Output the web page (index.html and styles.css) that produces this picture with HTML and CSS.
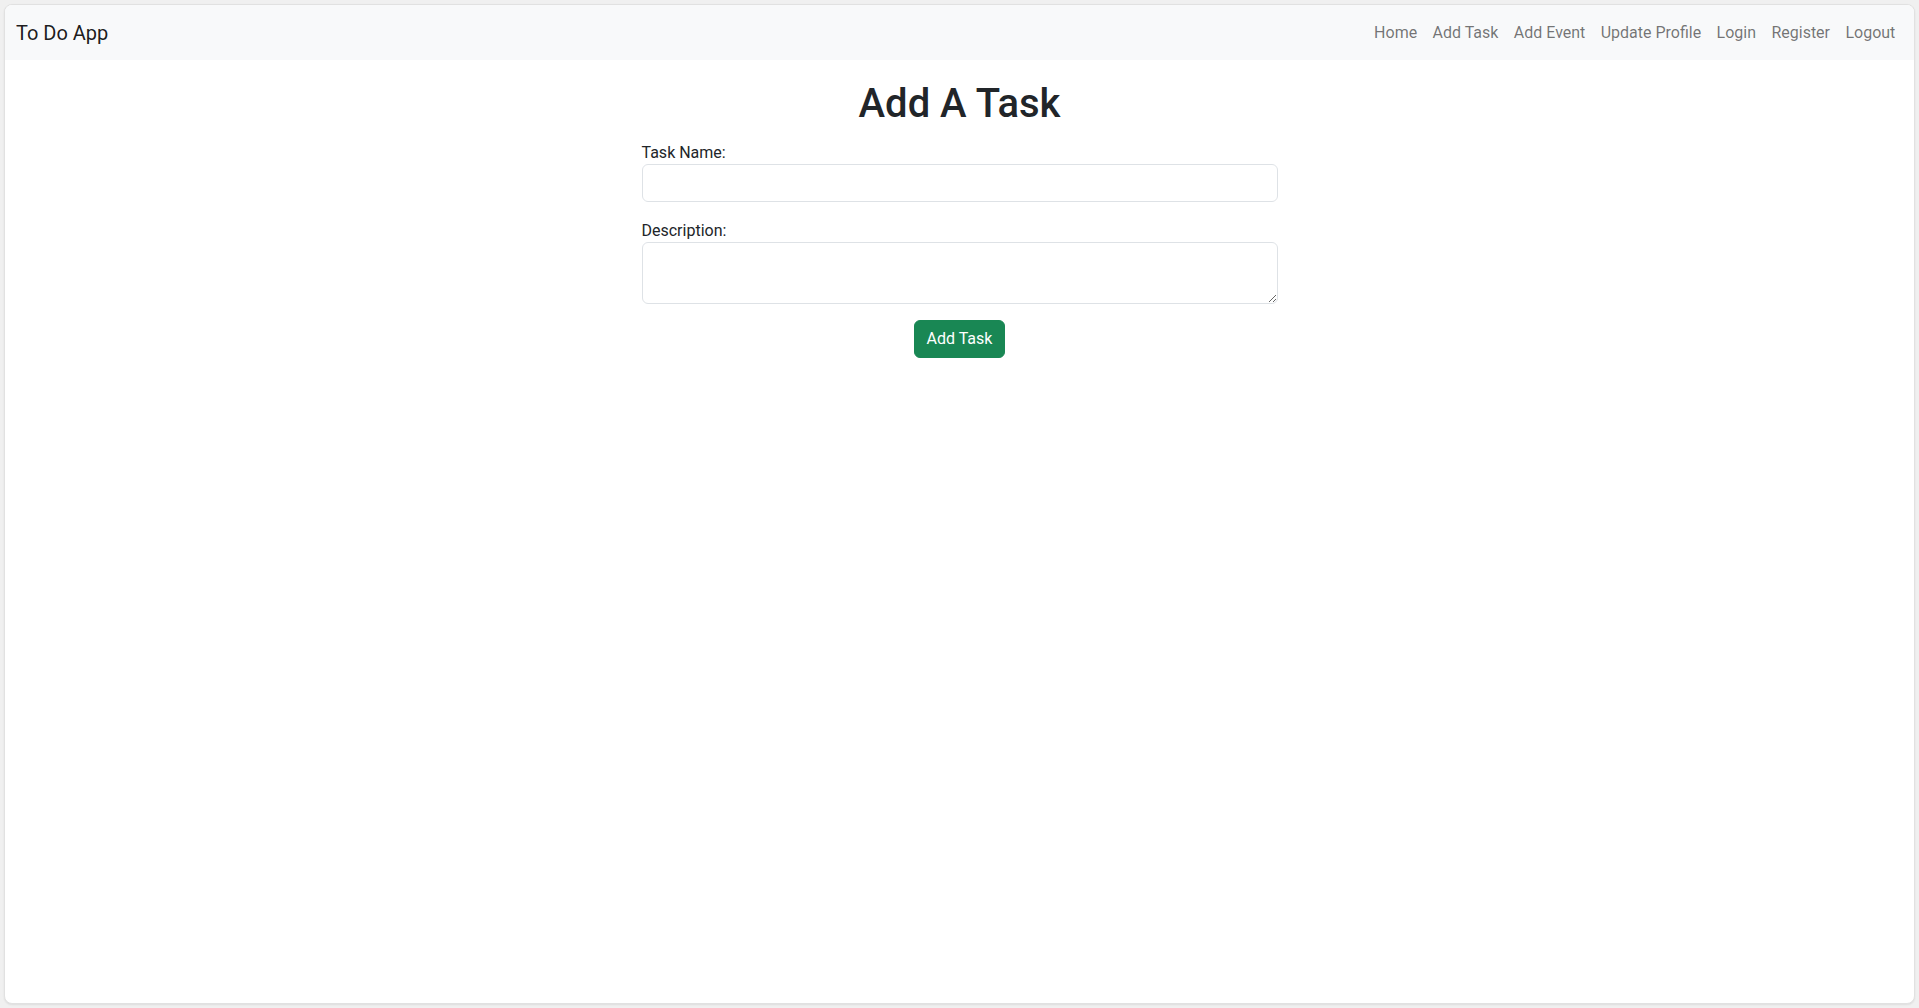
FILE: index.html
```html
<!DOCTYPE html>
<html lang="en">
<head>
<meta charset="utf-8">
<title>To Do App</title>
<link rel="stylesheet" href="styles.css">
</head>
<body>
<div class="window">
  <nav class="navbar">
    <a class="brand" href="#">To Do App</a>
    <ul class="nav">
      <li><a href="#">Home</a></li>
      <li><a href="#">Add Task</a></li>
      <li><a href="#">Add Event</a></li>
      <li><a href="#">Update Profile</a></li>
      <li><a href="#">Login</a></li>
      <li><a href="#">Register</a></li>
      <li><a href="#">Logout</a></li>
    </ul>
  </nav>
  <main class="content">
    <h1 class="title">Add A Task</h1>
    <form class="task-form">
      <div class="field">
        <label for="name">Task Name:</label>
        <input id="name" type="text" class="control">
      </div>
      <div class="field">
        <label for="desc">Description:</label>
        <textarea id="desc" rows="2" class="control area"></textarea>
      </div>
      <div class="actions">
        <button type="button" class="btn">Add Task</button>
      </div>
    </form>
  </main>
</div>
</body>
</html>
```
FILE: styles.css
```css
* { box-sizing: border-box; }
html, body { margin: 0; height: 100%; }
body {
  background: #f0f0f0;
  padding: 4px;
  font-family: Roboto, "Open Sans", "Liberation Sans", sans-serif;
  font-size: 16px;
  color: #212529;
}
.window {
  height: 1000px;
  background: #fff;
  border: 1px solid #e1e1e1;
  border-radius: 8px;
  overflow: hidden;
  box-shadow: 0 1px 2px rgba(0,0,0,0.08);
}
.navbar {
  display: flex;
  align-items: center;
  justify-content: space-between;
  background: #f8f9fa;
  height: 55px;
  padding: 0 11px 0 11px;
}
.brand {
  font-size: 20px;
  color: rgba(0,0,0,0.9);
  text-decoration: none;
  padding: 5px 0;
}
.nav {
  display: flex;
  list-style: none;
  margin: 0;
  padding: 0;
}
.nav a {
  display: block;
  padding: 8px 7.7px;
  line-height: 24px;
  color: rgba(0,0,0,0.55);
  text-decoration: none;
}
.content {
  width: 636px;
  margin: 0 auto;
}
.title {
  text-align: center;
  font-size: 40px;
  font-weight: 500;
  line-height: 48px;
  margin: 20px 0 12px;
}
.field { margin-bottom: 16px; }
.field label { display: block; line-height: 24px; padding-top: 1px; margin-bottom: -1px; }
.control {
  display: block;
  width: 100%;
  height: 38px;
  padding: 6px 12px;
  font: inherit;
  line-height: 24px;
  border: 1px solid #dee2e6;
  border-radius: 6px;
  background: #fff;
  color: #212529;
}
.area { height: 62px; resize: vertical; }
.actions { display: flex; justify-content: center; }
.btn {
  font: inherit;
  line-height: 24px;
  padding: 6px 12px;
  color: #fff;
  background: #198754;
  border: 1px solid #198754;
  border-radius: 6px;
}
```
